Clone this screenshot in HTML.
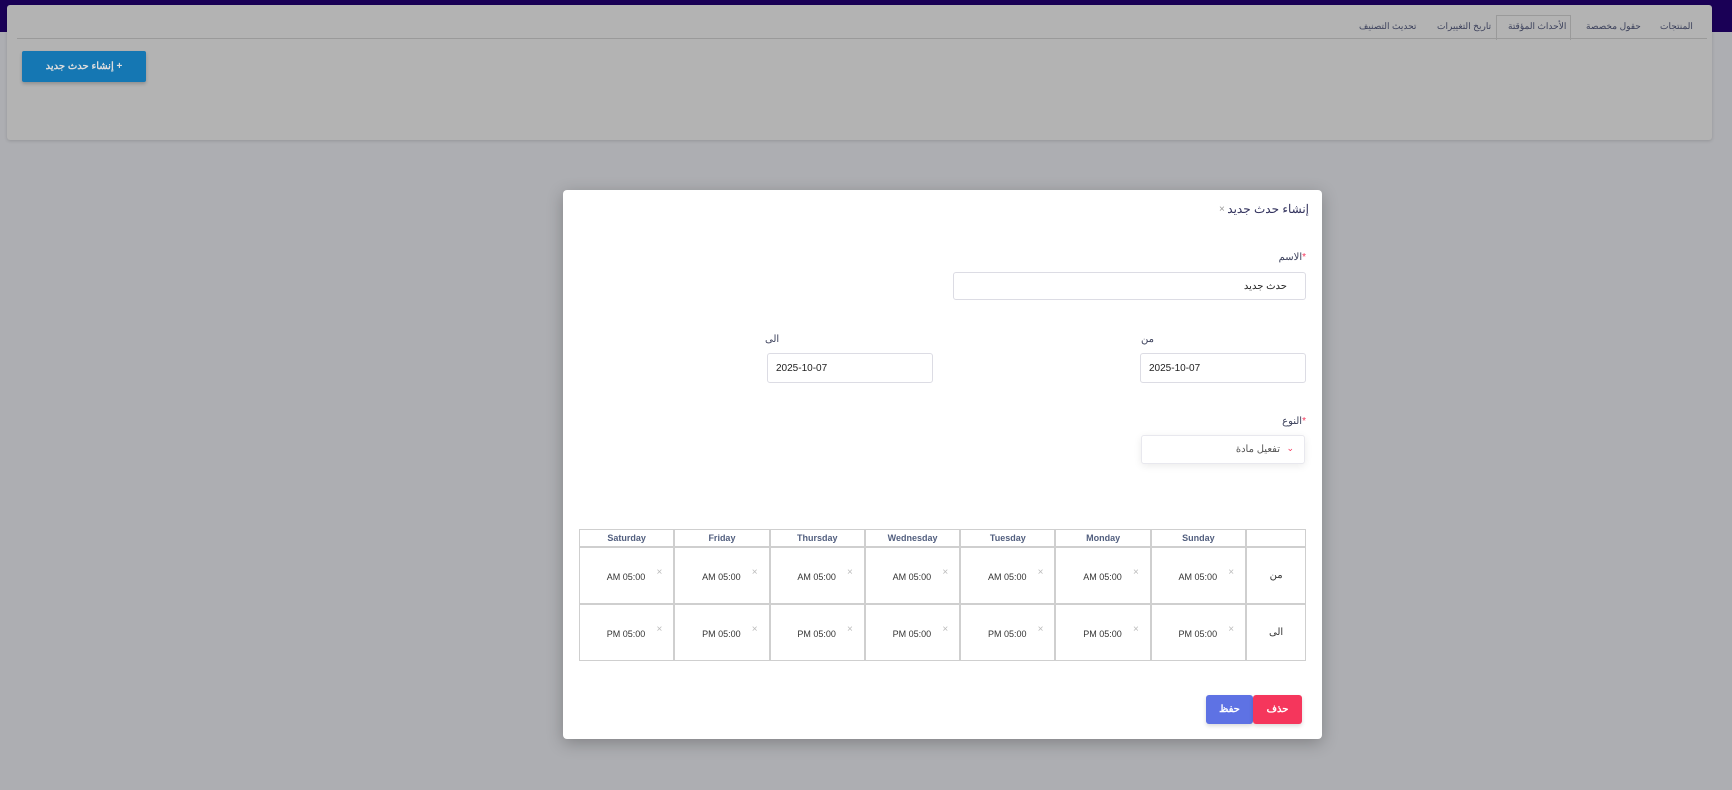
<!DOCTYPE html>
<html><head><meta charset="utf-8"><style>
*{box-sizing:border-box;margin:0;padding:0}
body{width:1732px;height:790px;background:#adaeb2;position:relative;overflow:hidden;font-family:"Liberation Sans","Noto Sans CJK SC",sans-serif;}
.abs{position:absolute}
.top{left:0;top:0;width:1732px;height:32px;background:#1a0056}
.card{left:7px;top:5px;width:1705px;height:135px;background:#b3b3b3;border-radius:3px;box-shadow:0 1px 3px rgba(0,0,0,.15)}
.tabline{left:17px;top:38px;width:1690px;height:1px;background:#9a9a9a}
.tab{top:21px;font-size:9px;color:#3a3f5a;direction:rtl;white-space:nowrap}
.acttab{left:1496px;top:15px;width:75px;height:25px;border:1px solid #9a9a9a;border-bottom:none;background:#b3b3b3}
.btn1{left:22px;top:51px;width:124px;height:31px;background:#1577b3;border-radius:2px;color:#ddd;font-size:10px;font-weight:bold;text-align:center;line-height:31px;direction:rtl;box-shadow:0 2px 3px rgba(0,0,0,.2)}
.modal{left:563px;top:190px;width:759px;height:549px;background:#fff;border-radius:4px;box-shadow:0 4px 16px rgba(0,0,0,.25)}
.lbl{font-size:10px;color:#3a3f5a;direction:rtl;white-space:nowrap}
.req{color:#f5365c}
.inp{border:1px solid #dcdce4;border-radius:3px;background:#fff;font-size:10px;color:#222}
table{position:absolute;left:579px;top:529px;width:727px;border-collapse:separate;border-spacing:0;table-layout:fixed}
td,th{border:1px solid #cfcfcf;font-size:9px}
th{height:18px;color:#525f7f;font-weight:bold}
td{height:57px;position:relative;font-size:9px;color:#333}
td .t{position:absolute;right:28px;top:24px;direction:ltr;unicode-bidi:bidi-override;white-space:nowrap}
td .x{position:absolute;right:11px;top:19px;color:#bbb;font-size:10px}
.b{height:29px;color:#fff;font-size:10px;font-weight:bold;text-align:center;line-height:29px;border-radius:3px;box-shadow:0 2px 4px rgba(0,0,0,.15)}
</style></head><body>
<div class="abs top"></div>
<div class="abs card"></div>
<div class="abs acttab"></div>
<div class="abs tabline"></div>
<div class="abs tab" style="left:1660px">المنتجات</div>
<div class="abs tab" style="left:1586px">حقول مخصصة</div>
<div class="abs tab" style="left:1508px">الأحداث المؤقتة</div>
<div class="abs tab" style="left:1437px">تاريخ التغييرات</div>
<div class="abs tab" style="left:1359px">تحديث التصنيف</div>
<div class="abs btn1">+ إنشاء حدث جديد</div>

<div class="abs modal"></div>
<div class="abs lbl" style="right:423px;top:202px;font-size:12px;color:#32325d">إنشاء حدث جديد</div>
<div class="abs" style="left:1219px;top:204px;font-size:10px;color:#999">×</div>
<div class="abs lbl" style="right:426px;top:252px"><span class="req">*</span>الاسم</div>
<div class="abs inp" style="left:953px;top:272px;width:353px;height:28px"><span class="abs" style="right:18px;top:8px;direction:rtl">حدث جديد</span></div>
<div class="abs lbl" style="left:1141px;top:334px">من</div>
<div class="abs lbl" style="left:765px;top:334px">الى</div>
<div class="abs inp" style="left:1140px;top:353px;width:166px;height:30px"><span class="abs" style="left:8px;top:9px">2025-10-07</span></div>
<div class="abs inp" style="left:767px;top:353px;width:166px;height:30px"><span class="abs" style="left:8px;top:9px">2025-10-07</span></div>
<div class="abs lbl" style="right:426px;top:416px"><span class="req">*</span>النوع</div>
<div class="abs inp" style="left:1141px;top:435px;width:164px;height:29px;box-shadow:0 2px 8px rgba(0,0,0,.08);border-color:#e8e8ee"><span class="abs" style="right:24px;top:8px;direction:rtl;color:#555">تفعيل مادة</span><span class="abs" style="right:10px;top:7px;color:#f5365c;font-size:9px">⌄</span></div>

<table>
<colgroup><col style="width:95.3px"><col style="width:95.3px"><col style="width:95.3px"><col style="width:95.3px"><col style="width:95.3px"><col style="width:95.3px"><col style="width:95.3px"><col style="width:60px"></colgroup>
<tr><th>Saturday</th><th>Friday</th><th>Thursday</th><th>Wednesday</th><th>Tuesday</th><th>Monday</th><th>Sunday</th><th></th></tr>
<tr>
<td><span class="t">AM 05:00</span><span class="x">×</span></td>
<td><span class="t">AM 05:00</span><span class="x">×</span></td>
<td><span class="t">AM 05:00</span><span class="x">×</span></td>
<td><span class="t">AM 05:00</span><span class="x">×</span></td>
<td><span class="t">AM 05:00</span><span class="x">×</span></td>
<td><span class="t">AM 05:00</span><span class="x">×</span></td>
<td><span class="t">AM 05:00</span><span class="x">×</span></td>
<td style="text-align:center;font-size:10px">من</td></tr>
<tr>
<td><span class="t">PM 05:00</span><span class="x">×</span></td>
<td><span class="t">PM 05:00</span><span class="x">×</span></td>
<td><span class="t">PM 05:00</span><span class="x">×</span></td>
<td><span class="t">PM 05:00</span><span class="x">×</span></td>
<td><span class="t">PM 05:00</span><span class="x">×</span></td>
<td><span class="t">PM 05:00</span><span class="x">×</span></td>
<td><span class="t">PM 05:00</span><span class="x">×</span></td>
<td style="text-align:center;font-size:10px">الى</td></tr>
</table>

<div class="abs b" style="left:1206px;top:695px;width:47px;background:#5e72e4">حفظ</div>
<div class="abs b" style="left:1253px;top:695px;width:49px;background:#f5365c">حذف</div>
</body></html>
